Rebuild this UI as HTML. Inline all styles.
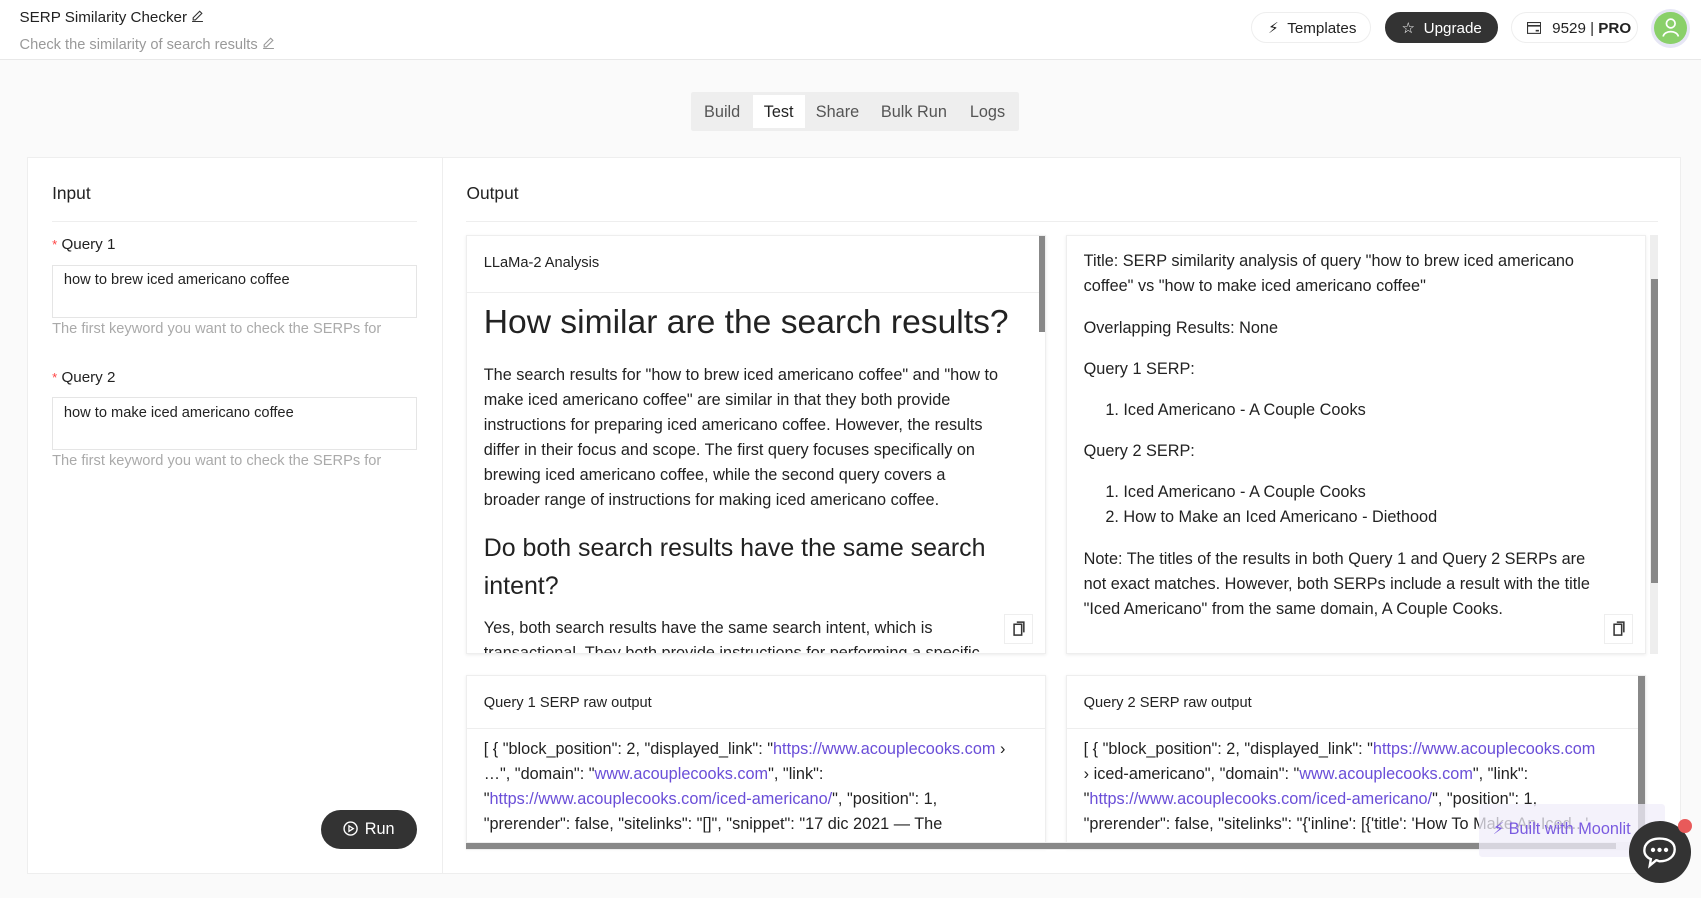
<!DOCTYPE html>
<html><head><meta charset="utf-8">
<style>
html,body{margin:0;padding:0;}
body{width:1568px;height:828px;zoom:1.08482;background:#fafafa;font-family:"Liberation Sans",sans-serif;color:#222;position:relative;overflow:hidden;}
.a{position:absolute;}
.nw{white-space:nowrap;}
.pill{position:absolute;height:29px;border-radius:15px;background:#fff;border:1px solid #eee;font-size:14px;line-height:29px;box-sizing:border-box;}
.panel{position:absolute;background:#fff;border:1px solid #eee;box-shadow:0 1px 3px rgba(0,0,0,.08);overflow:hidden;box-sizing:border-box;}
.p{font-size:15px;line-height:23px;color:#222;}
.lnk{color:#6a4ed8;}
.ta{position:absolute;left:48px;width:336px;height:49px;border:1px solid #e5e5e5;box-sizing:border-box;background:#fff;font-size:13.5px;padding:6px 10px;}
.help{position:absolute;left:48px;font-size:13.5px;color:#aaa;}
.lbl{position:absolute;left:48px;font-size:14px;}
.lbl b{color:#f44;font-weight:normal;font-size:12px;margin-right:4px;}
.cp{position:absolute;left:495px;top:348px;width:26px;height:28px;border:1px solid #eee;background:#fff;box-sizing:border-box;}
.cp svg{position:absolute;left:7px;top:6px;}
</style></head><body>
<div class="a" style="left:0;top:0;width:1568px;height:54px;background:#fff;border-bottom:1px solid #e8e8e8"></div>
<div class="a nw" style="left:18px;top:7px;font-size:14px;font-weight:500">SERP Similarity Checker <svg width="12" height="13" viewBox="0 0 12 13"><path d="M2 9 L8 3 L10 5 L4 11 L2 11Z M1 12.5H11" fill="none" stroke="#333" stroke-width="1"/></svg></div>
<div class="a nw" style="left:18px;top:32px;font-size:13.5px;color:#999">Check the similarity of search results <svg width="12" height="13" viewBox="0 0 12 13"><path d="M2 9 L8 3 L10 5 L4 11 L2 11Z M1 12.5H11" fill="none" stroke="#999" stroke-width="1"/></svg></div>

<div class="pill" style="left:1153px;top:11px;width:111px;padding-left:15px">⚡︎ <span style="margin-left:4px">Templates</span></div>
<div class="pill" style="left:1277px;top:11px;width:104px;background:#333;color:#fff;border-color:#333;padding-left:14px">☆ <span style="margin-left:4px">Upgrade</span></div>
<div class="pill" style="left:1393px;top:11px;width:117px;padding-left:14px"><svg width="13" height="11" viewBox="0 0 13 11" style="vertical-align:-1px"><rect x="0.5" y="0.5" width="12" height="10" fill="none" stroke="#333"/><path d="M0.5 3.5H12.5" stroke="#333" stroke-width="1.5"/><path d="M8 8H11" stroke="#333" stroke-width="1.5"/></svg> <span style="margin-left:6px">9529 | <b>PRO</b></span></div>
<div class="a" style="left:1522px;top:8px;width:36px;height:36px;border-radius:50%;background:#e6e6f5"></div>
<div class="a" style="left:1525px;top:11px;width:30px;height:30px;border-radius:50%;background:#8ad06a"></div>
<svg class="a" style="left:1531px;top:16px" width="18" height="20" viewBox="0 0 18 20"><circle cx="9" cy="6" r="4" fill="none" stroke="#fff" stroke-width="1.6"/><path d="M2 18 C3 12 15 12 16 18" fill="none" stroke="#fff" stroke-width="1.6"/></svg>

<div class="a" style="left:637px;top:85px;width:302px;height:36px;background:#eee;border-radius:2px"></div>
<div class="a" style="left:694px;top:88px;width:48px;height:30px;background:#fff"></div>
<div class="a nw" style="left:649px;top:95px;font-size:15px;color:#555">Build</div>
<div class="a nw" style="left:704px;top:95px;font-size:15px;color:#222">Test</div>
<div class="a nw" style="left:752px;top:95px;font-size:15px;color:#555">Share</div>
<div class="a nw" style="left:812px;top:95px;font-size:15px;color:#555">Bulk Run</div>
<div class="a nw" style="left:894px;top:95px;font-size:15px;color:#555">Logs</div>

<div class="a" style="left:25px;top:145px;width:1525px;height:661px;background:#fff;border:1px solid #eee;box-sizing:border-box"></div>
<div class="a" style="left:407px;top:146px;width:1px;height:659px;background:#eee"></div>

<div class="a" style="left:48px;top:169px;font-size:16px">Input</div>
<div class="a" style="left:48px;top:204px;width:336px;height:1px;background:#eee"></div>
<div class="lbl" style="top:218px"><b>*</b>Query 1</div>
<div class="ta" style="top:244px">how to brew iced americano coffee</div>
<div class="help nw" style="top:296px">The first keyword you want to check the SERPs for</div>
<div class="lbl" style="top:340px"><b>*</b>Query 2</div>
<div class="ta" style="top:366px">how to make iced americano coffee</div>
<div class="help nw" style="top:418px">The first keyword you want to check the SERPs for</div>
<div class="a" style="left:296px;top:747px;width:88px;height:36px;border-radius:18px;background:#333;color:#fff;font-size:15px;line-height:36px;text-align:center"><svg width="14" height="14" viewBox="0 0 14 14" style="vertical-align:-2px;margin-right:6px"><circle cx="7" cy="7" r="6" fill="none" stroke="#fff" stroke-width="1.3"/><path d="M5.5 4.5L9.5 7L5.5 9.5Z" fill="none" stroke="#fff" stroke-width="1.2"/></svg>Run</div>

<div class="a" style="left:430px;top:169px;font-size:16px">Output</div>
<div class="a" style="left:430px;top:204px;width:1098px;height:1px;background:#eee"></div>

<div class="panel" style="left:430px;top:217px;width:534px;height:386px">
 <div style="height:51px;border-bottom:1px solid #eee;font-size:13.5px;line-height:50px;padding-left:15px">LLaMa-2 Analysis</div>
 <div class="nw" style="padding:8px 15px;">
  <div style="font-size:31px;line-height:40px">How similar are the search results?</div>
  <div class="p" style="margin-top:17px">The search results for "how to brew iced americano coffee" and "how to<br>make iced americano coffee" are similar in that they both provide<br>instructions for preparing iced americano coffee. However, the results<br>differ in their focus and scope. The first query focuses specifically on<br>brewing iced americano coffee, while the second query covers a<br>broader range of instructions for making iced americano coffee.</div>
  <div style="font-size:23px;line-height:35px;margin-top:16px">Do both search results have the same search<br>intent?</div>
  <div class="p" style="margin-top:9px">Yes, both search results have the same search intent, which is<br>transactional. They both provide instructions for performing a specific</div>
 </div>
 <div class="a" style="left:527px;top:0;width:6px;height:88px;background:#888"></div>
 <div class="cp"><svg width="11" height="14" viewBox="0 0 11 14"><rect x="1" y="3" width="7" height="10" fill="none" stroke="#333" stroke-width="1.4"/><path d="M3.5 1H10V10.5" fill="none" stroke="#333" stroke-width="1.4"/></svg></div>
</div>

<div class="panel" style="left:983px;top:217px;width:534px;height:386px">
 <div class="p nw" style="padding:12px 15px">Title: SERP similarity analysis of query "how to brew iced americano<br>coffee" vs "how to make iced americano coffee"
 <div style="margin-top:15px">Overlapping Results: None</div>
 <div style="margin-top:15px">Query 1 SERP:</div>
 <div style="margin-top:15px;padding-left:20px">1. Iced Americano - A Couple Cooks</div>
 <div style="margin-top:15px">Query 2 SERP:</div>
 <div style="margin-top:15px;padding-left:20px">1. Iced Americano - A Couple Cooks<br>2. How to Make an Iced Americano - Diethood</div>
 <div style="margin-top:15px">Note: The titles of the results in both Query 1 and Query 2 SERPs are<br>not exact matches. However, both SERPs include a result with the title<br>"Iced Americano" from the same domain, A Couple Cooks.</div>
 </div>
 <div class="cp"><svg width="11" height="14" viewBox="0 0 11 14"><rect x="1" y="3" width="7" height="10" fill="none" stroke="#333" stroke-width="1.4"/><path d="M3.5 1H10V10.5" fill="none" stroke="#333" stroke-width="1.4"/></svg></div>
</div>
<div class="a" style="left:1521px;top:217px;width:7px;height:386px;background:#eee"></div>
<div class="a" style="left:1522px;top:257px;width:6px;height:280px;background:#888"></div>

<div class="panel" style="left:430px;top:622px;width:534px;height:160px">
 <div style="height:48px;border-bottom:1px solid #eee;font-size:13.5px;line-height:50px;padding-left:15px">Query 1 SERP raw output</div>
 <div class="p nw" style="padding:8px 15px">[ { "block_position": 2, "displayed_link": "<span class="lnk">https://www.acouplecooks.com</span> ›<br>…", "domain": "<span class="lnk">www.acouplecooks.com</span>", "link":<br>"<span class="lnk">https://www.acouplecooks.com/iced-americano/</span>", "position": 1,<br>"prerender": false, "sitelinks": "[]", "snippet": "17 dic 2021 — The</div>
</div>
<div class="panel" style="left:983px;top:622px;width:534px;height:160px">
 <div style="height:48px;border-bottom:1px solid #eee;font-size:13.5px;line-height:50px;padding-left:15px">Query 2 SERP raw output</div>
 <div class="p nw" style="padding:8px 15px">[ { "block_position": 2, "displayed_link": "<span class="lnk">https://www.acouplecooks.com</span><br>› iced-americano", "domain": "<span class="lnk">www.acouplecooks.com</span>", "link":<br>"<span class="lnk">https://www.acouplecooks.com/iced-americano/</span>", "position": 1,<br>"prerender": false, "sitelinks": "{'inline': [{'title': 'How To Make An Iced...'</div>
 <div class="a" style="left:526px;top:0;width:7px;height:160px;background:#888"></div>
</div>
<div class="a" style="left:430px;top:776px;width:1100px;height:8px;background:#eee"></div>
<div class="a" style="left:430px;top:777px;width:1060px;height:6px;background:#888"></div>

<div class="a" style="left:1363px;top:741px;width:172px;height:49px;background:rgba(240,238,250,.75);border-radius:3px"></div>
<div class="a nw" style="left:1376px;top:755px;font-size:15px;color:#7a5be0">⚡︎ Built with Moonlit</div>
<div class="a" style="left:1502px;top:757px;width:57px;height:57px;border-radius:50%;background:#333"></div>
<svg class="a" style="left:1512px;top:767px" width="36" height="36" viewBox="0 0 36 36"><path d="M18 6 C9 6 4 11 4 17 C4 21 7 24 10 25 L9 31 L15 26 C16 26 17 27 18 27 C27 27 32 22 32 16 C32 10 27 6 18 6Z" fill="none" stroke="#fff" stroke-width="2.2"/><circle cx="12" cy="16.5" r="2" fill="#fff"/><circle cx="18" cy="16.5" r="2" fill="#fff"/><circle cx="24" cy="16.5" r="2" fill="#fff"/></svg>
<div class="a" style="left:1547px;top:755px;width:13px;height:13px;border-radius:50%;background:#e85a5a"></div>
</body></html>
